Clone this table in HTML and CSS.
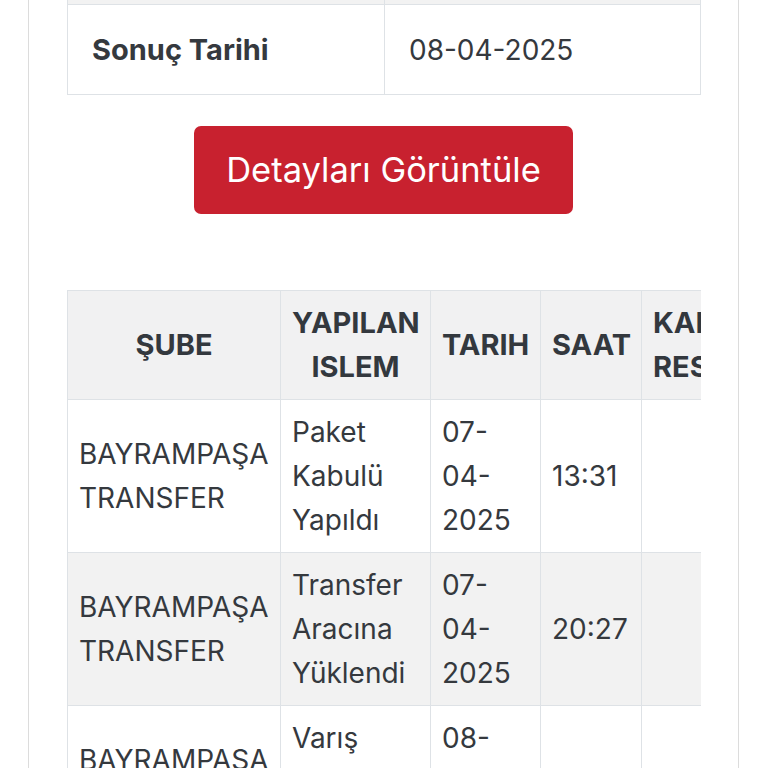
FILE: index.html
```html
<!DOCTYPE html>
<html lang="tr">
<head>
<meta charset="utf-8">
<title>Kargo Takip</title>
<link rel="stylesheet" href="styles.css">
</head>
<body>
<div class="card">
  <table class="info">
    <tr class="stripe prev"><td class="label"></td><td></td></tr>
    <tr><td class="label">Sonuç Tarihi</td><td class="value">08-04-2025</td></tr>
  </table>
  <div class="actions">
    <button class="btn">Detayları Görüntüle</button>
  </div>
  <div class="scroll">
    <table class="moves">
      <colgroup>
        <col class="c1"><col class="c2"><col class="c3"><col class="c4"><col class="c5">
      </colgroup>
      <thead>
        <tr>
          <th>ŞUBE</th>
          <th>YAPILAN ISLEM</th>
          <th>TARIH</th>
          <th>SAAT</th>
          <th>KANIT RESMİ</th>
        </tr>
      </thead>
      <tbody>
        <tr>
          <td>BAYRAMPAŞA TRANSFER</td>
          <td>Paket Kabulü Yapıldı</td>
          <td>07-04-2025</td>
          <td>13:31</td>
          <td></td>
        </tr>
        <tr class="stripe">
          <td>BAYRAMPAŞA TRANSFER</td>
          <td>Transfer Aracına Yüklendi</td>
          <td>07-04-2025</td>
          <td>20:27</td>
          <td></td>
        </tr>
        <tr>
          <td>BAYRAMPAŞA TRANSFER</td>
          <td>Varış Şubesine Ulaştı</td>
          <td>08-04-2025</td>
          <td>07:12</td>
          <td></td>
        </tr>
      </tbody>
    </table>
  </div>
</div>
</body>
</html>
```

FILE: styles.css
```css
html, body {
  margin: 0;
  padding: 0;
  background: #ffffff;
}

body {
  font-family: Inter, "Noto Sans", "Liberation Sans", sans-serif;
  color: #35393e;
  height: 768px;
  overflow: hidden;
}

.card {
  margin: 0 29px 0 28px;
  border-left: 1px solid #dcdcdc;
  border-right: 1px solid #dcdcdc;
  padding: 0 38px;
  min-height: 768px;
}

table {
  border-collapse: collapse;
}

.info {
  width: 634px;
  font-size: 28px;
}

.info td {
  border: 1px solid #dee2e6;
  height: 89px;
  padding: 0 24px;
  vertical-align: middle;
}

.info .label {
  width: 268px;
  font-size: 29px;
  font-weight: 700;
}

.info .prev td {
  height: 4px;
  padding: 0;
  border-top: none;
}

.stripe {
  background: #f2f2f2;
}

.actions {
  display: flex;
  justify-content: center;
  padding: 31px 0 76px;
}

.btn {
  font-family: inherit;
  font-size: 34.5px;
  line-height: 54px;
  padding: 17px 32px;
  color: #ffffff;
  background: #c8212f;
  border: none;
  border-radius: 7px;
}

.scroll {
  width: 634px;
  overflow: hidden;
}

.moves {
  table-layout: fixed;
  width: 694px;
  font-size: 28px;
  line-height: 44px;
}

.moves .c1 { width: 213px; }
.moves .c2 { width: 150px; }
.moves .c3 { width: 110px; }
.moves .c4 { width: 101px; }
.moves .c5 { width: 120px; }

.moves th,
.moves td {
  border: 1px solid #dee2e6;
  padding: 10px 11px;
  vertical-align: middle;
  text-align: left;
  overflow: hidden;
}

.moves th {
  background: #f1f1f2;
  font-size: 29px;
  font-weight: 700;
  text-align: center;
  color: #33383e;
}

.moves th:last-child {
  text-align: left;
}
```
